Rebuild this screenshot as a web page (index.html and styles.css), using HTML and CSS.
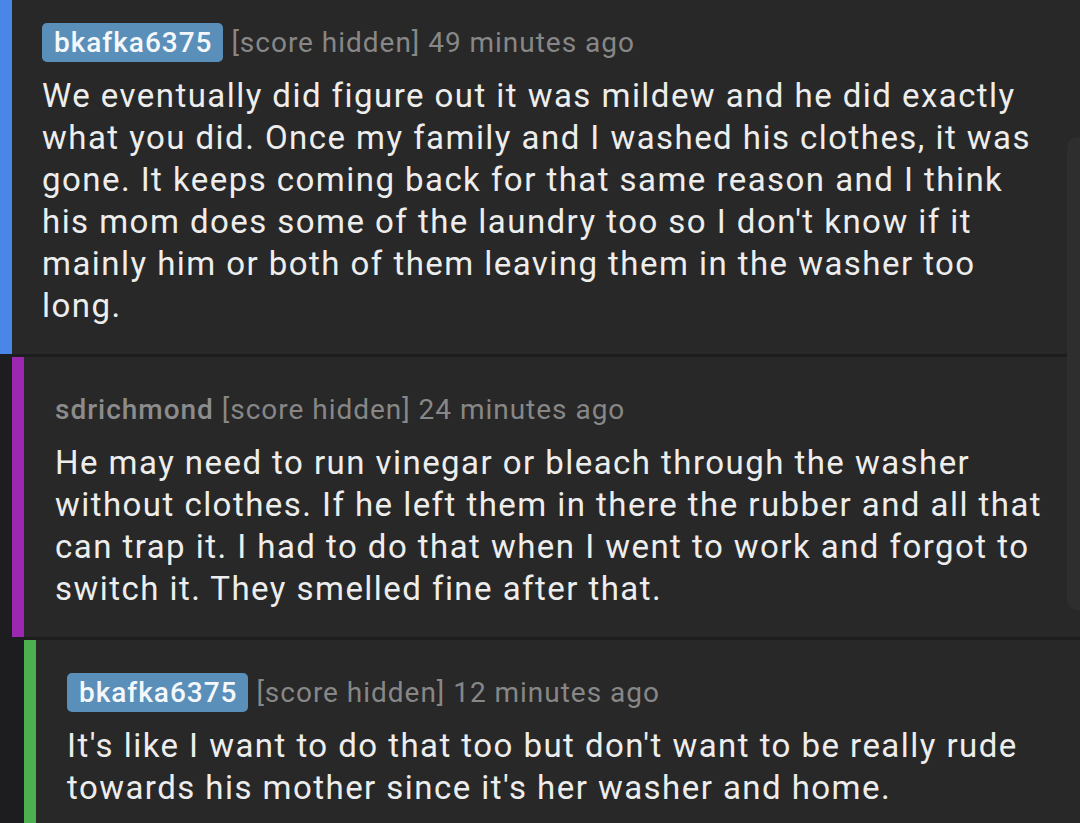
FILE: index.html
```html
<!DOCTYPE html>
<html>
<head>
<meta charset="utf-8">
<link rel="stylesheet" href="styles.css">
</head>
<body>
<div class="thread">
  <div class="comment comment--first depth-0">
    <div class="meta"><span class="author author--op">bkafka6375</span> <span class="info">[score hidden] 49 minutes ago</span></div>
    <p class="body">We eventually did figure out it was mildew and he did exactly what you did. Once my family and I washed his clothes, it was gone. It keeps coming back for that same reason and I think his mom does some of the laundry too so I don't know if it mainly him or both of them leaving them in the washer too long.</p>
  </div>
  <div class="comment depth-1">
    <div class="meta"><span class="author">sdrichmond</span> <span class="info">[score hidden] 24 minutes ago</span></div>
    <p class="body">He may need to run vinegar or bleach through the washer without clothes. If he left them in there the rubber and all that can trap it. I had to do that when I went to work and forgot to switch it. They smelled fine after that.</p>
  </div>
  <div class="comment depth-2">
    <div class="meta"><span class="author author--op">bkafka6375</span> <span class="info">[score hidden] 12 minutes ago</span></div>
    <p class="body">It's like I want to do that too but don't want to be really rude towards his mother since it's her washer and home.</p>
  </div>
</div>
<div class="scroll-thumb"></div>
</body>
</html>
```

FILE: styles.css
```css
html, body {
  margin: 0;
  padding: 0;
  background: #1d1d1f;
  height: 100%;
  overflow: hidden;
}
body {
  font-family: Roboto, "Noto Sans", sans-serif;
  color: #ededed;
}
.thread {
  display: flex;
  flex-direction: column;
  gap: 3px;
}
.comment {
  background: #282828;
  border-left: 12px solid #4a86e8;
  padding: 32px 30px 27px 30px;
}
.comment--first {
  padding-top: 22px;
}
.depth-1 {
  margin-left: 12px;
  border-left-color: #9c27b0;
  padding-left: 31px;
}
.depth-2 {
  margin-left: 24px;
  border-left-color: #4caf50;
  padding-left: 31px;
  padding-bottom: 14px;
}
.meta {
  height: 40px;
  display: flex;
  align-items: center;
  gap: 8px;
  font-size: 28px;
  letter-spacing: 0.035em;
  color: #8a8a8a;
  margin-bottom: 13px;
}
.author {
  font-weight: 500;
  color: #8c8c8c;
}
.author--op {
  background: #5a8fb9;
  color: #f4f8fb;
  border-radius: 5px;
  padding: 0 11px 0 12px;
  line-height: 39px;
}
.info {
  color: #878787;
}
.body {
  margin: 0;
  font-size: 33px;
  line-height: 42px;
  letter-spacing: 0.044em;
}
.scroll-thumb {
  position: absolute;
  top: 137px;
  right: 0;
  width: 13px;
  height: 473px;
  background: #2e2e2e;
  border-radius: 10px 0 0 10px;
}
```
